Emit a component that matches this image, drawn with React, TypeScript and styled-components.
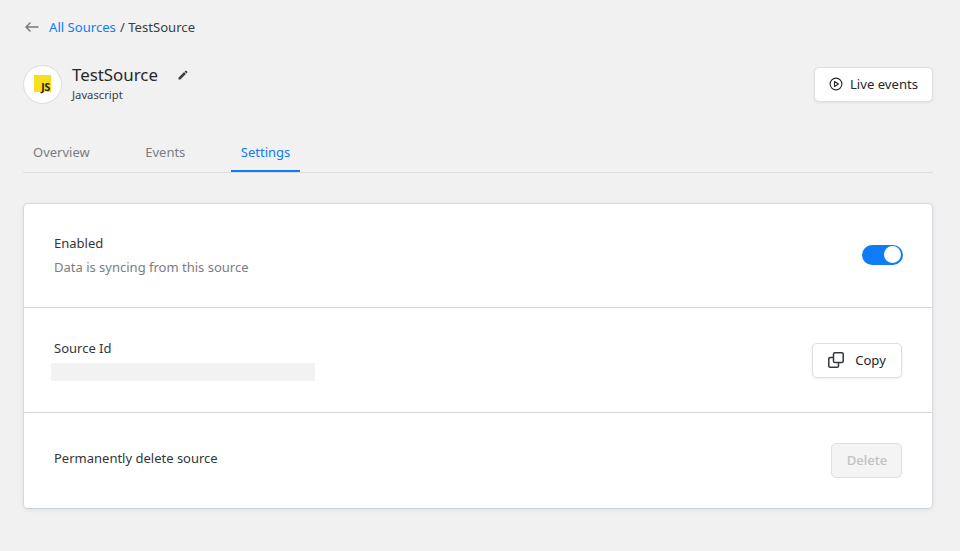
import styled, { createGlobalStyle } from 'styled-components';

const GlobalStyle = createGlobalStyle`
  html, body {
    margin: 0;
    padding: 0;
    background: #f1f1f1;
  }
  body {
    font-family: "Noto Sans", "Open Sans", sans-serif;
    color: #26282c;
  }
`;

const Page = styled.div`
  box-sizing: border-box;
  width: 960px;
  height: 551px;
  padding: 17px 27px 0 23px;
  overflow: hidden;
`;

const Breadcrumb = styled.nav`
  display: flex;
  align-items: center;
  height: 20px;
  padding-left: 1px;
  font-size: 13.125px;
  line-height: 20px;
  color: #3b3e44;
`;

const BackIcon = styled.svg`
  width: 16px;
  height: 16px;
  margin-right: 9px;
  color: #74777d;
`;

const CrumbLink = styled.a`
  color: #0f7bf5;
  margin-right: 4px;
`;

const Header = styled.header`
  display: flex;
  align-items: center;
  justify-content: space-between;
  margin-top: 27px;
  height: 40px;
`;

const SourceInfo = styled.div`
  display: flex;
  align-items: center;
`;

const LogoCircle = styled.div`
  box-sizing: border-box;
  width: 39px;
  height: 39px;
  border-radius: 50%;
  background: #fff;
  border: 1px solid #d9dbdf;
  display: flex;
  align-items: center;
  justify-content: center;
  margin-right: 10px;
`;

const JsBadge = styled.div`
  box-sizing: border-box;
  width: 17px;
  height: 17px;
  margin-bottom: 1px;
  background: #f7df1e;
  color: #1f1f1f;
  font-size: 10.5px;
  font-weight: 700;
  line-height: 10px;
  padding: 7px 1px 0 0;
  text-align: right;
  letter-spacing: -0.2px;
`;

const TitleBlock = styled.div`
  display: flex;
  flex-direction: column;
  margin-bottom: 2px;
`;

const TitleRow = styled.div`
  display: flex;
  align-items: center;
`;

const Title = styled.h1`
  margin: 0;
  font-size: 16.875px;
  font-weight: 400;
  line-height: 24px;
  color: #26282c;
`;

const EditIcon = styled.svg`
  width: 12px;
  height: 12px;
  margin-left: 19px;
  color: #3b3e44;
`;

const Subtitle = styled.div`
  font-size: 11.25px;
  line-height: 16px;
  color: #3b3e44;
`;

const Button = styled.button`
  box-sizing: border-box;
  display: inline-flex;
  align-items: center;
  justify-content: center;
  height: 35px;
  border-radius: 5px;
  border: 1px solid #dcdfe3;
  background: #fff;
  color: #26282c;
  font-family: inherit;
  font-size: 13.125px;
  box-shadow: 0 1px 3px rgba(30, 40, 60, 0.08);
  padding: 0;
`;

const LiveButton = styled(Button)`
  width: 119px;
  gap: 7px;
`;

const CopyButton = styled(Button)`
  width: 90px;
  gap: 11px;
`;

const DeleteButton = styled(Button)`
  width: 71px;
  padding: 0 0 2px 1px;
  background: #f4f4f4;
  color: #c0c1c4;
  font-weight: 500;
  box-shadow: none;
`;

const Tabs = styled.div`
  display: flex;
  margin-top: 30px;
  border-bottom: 1px solid #dcdde1;
  height: 38px;
`;

const Tab = styled.div<{ $active?: boolean }>`
  box-sizing: border-box;
  height: 38px;
  padding: 0 10px;
  margin-right: 35.5px;
  font-size: 13px;
  line-height: 36px;
  color: ${(p) => (p.$active ? '#0f7bf5' : '#7a7d83')};
  border-bottom: ${(p) => (p.$active ? '2px solid #0f7bf5' : 'none')};
`;

const Card = styled.section`
  box-sizing: border-box;
  margin-top: 30px;
  height: 306px;
  background: #fff;
  border: 1px solid #d5d8de;
  border-bottom-color: #c5ced9;
  border-radius: 5px;
  box-shadow: 0 1px 4px rgba(30, 40, 60, 0.08);
`;

const Row = styled.div<{ $height: number }>`
  box-sizing: border-box;
  height: ${(p) => p.$height}px;
  padding: 0 30px;
  display: flex;
  align-items: center;
  justify-content: space-between;
  border-bottom: 1px solid #d5d9df;
  &:last-child {
    border-bottom: none;
  }
`;

const RowText = styled.div`
  margin-bottom: 2px;
`;

const RowLabel = styled.div`
  font-size: 13px;
  line-height: 20px;
  color: #33363b;
`;

const DeleteLabel = styled(RowLabel)`
  margin-bottom: 6px;
`;

const RowHint = styled.div`
  margin-top: 4px;
  font-size: 13px;
  line-height: 20px;
  color: #7a7d83;
`;

const Placeholder = styled.div`
  width: 264px;
  height: 18px;
  margin: 5px 0 0 -3px;
  background: #f2f2f2;
`;

const Toggle = styled.div`
  box-sizing: border-box;
  width: 41px;
  height: 20px;
  margin: 0 -1px 2px 0;
  border-radius: 10px;
  background: #0f7bf5;
  padding: 1.5px 2px;
  display: flex;
  justify-content: flex-end;
`;

const ToggleKnob = styled.div`
  width: 17px;
  height: 17px;
  border-radius: 50%;
  background: #fff;
`;

export default function App() {
  return (
    <>
      <GlobalStyle />
      <Page>
        <Breadcrumb>
          <BackIcon viewBox="0 0 16 16" fill="none" stroke="currentColor" strokeWidth="1.4">
            <path d="M14.5 8H2M6.5 3.5 2 8l4.500 4.500" />
          </BackIcon>
          <CrumbLink>All Sources</CrumbLink>/&nbsp;TestSource
        </Breadcrumb>

        <Header>
          <SourceInfo>
            <LogoCircle>
              <JsBadge>JS</JsBadge>
            </LogoCircle>
            <TitleBlock>
              <TitleRow>
                <Title>TestSource</Title>
                <EditIcon viewBox="0 0 24 24" fill="currentColor">
                  <path d="M3 17.250V21h3.750L17.810 9.940l-3.750-3.750L3 17.250zM20.710 7.040a1 1 0 0 0 0-1.410l-2.340-2.340a1 1 0 0 0-1.410 0l-1.830 1.830 3.750 3.750 1.830-1.830z" />
                </EditIcon>
              </TitleRow>
              <Subtitle>Javascript</Subtitle>
            </TitleBlock>
          </SourceInfo>
          <LiveButton>
            <svg width="14" height="14" viewBox="0 0 14 14" fill="none" stroke="#26282c" strokeWidth="1.1">
              <circle cx="7" cy="7" r="5.900" />
              <path d="M5.500 4.500v5L9.500 7z" strokeLinejoin="round" />
            </svg>
            Live events
          </LiveButton>
        </Header>

        <Tabs>
          <Tab>Overview</Tab>
          <Tab>Events</Tab>
          <Tab $active>Settings</Tab>
        </Tabs>

        <Card>
          <Row $height={104}>
            <RowText>
              <RowLabel>Enabled</RowLabel>
              <RowHint>Data is syncing from this source</RowHint>
            </RowText>
            <Toggle>
              <ToggleKnob />
            </Toggle>
          </Row>
          <Row $height={105}>
            <RowText>
              <RowLabel>Source Id</RowLabel>
              <Placeholder />
            </RowText>
            <CopyButton>
              <svg width="16" height="16" viewBox="0 0 16 16" fill="none" stroke="#33363b" strokeWidth="1.500">
                <rect x="5.500" y="0.800" width="9.700" height="9.700" rx="1.300" />
                <path d="M5.500 5.500H2.100A1.300 1.300 0 0 0 0.800 6.800v7.100a1.300 1.300 0 0 0 1.300 1.300h7.100a1.300 1.300 0 0 0 1.300-1.300v-3.400" />
              </svg>
              Copy
            </CopyButton>
          </Row>
          <Row $height={95}>
            <DeleteLabel>Permanently delete source</DeleteLabel>
            <DeleteButton disabled>Delete</DeleteButton>
          </Row>
        </Card>
      </Page>
    </>
  );
}
